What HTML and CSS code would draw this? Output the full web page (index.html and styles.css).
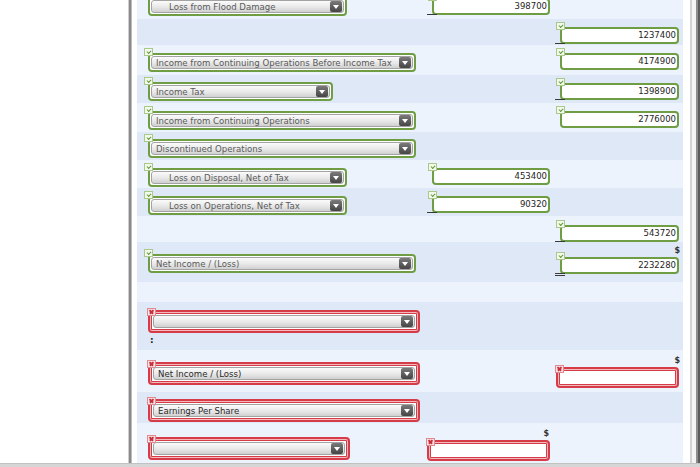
FILE: index.html
```html
<!DOCTYPE html>
<html>
<head>
<meta charset="utf-8">
<link rel="stylesheet" href="styles.css">
</head>
<body>
<div class="screen">
  <div class="side"></div>
  <div class="divider"></div>
  <div class="panel">
    <div class="sheet">
      <!-- row 1 -->
      <div class="row r1 lt">
        <div class="cell a pt7">
          <div class="field dd green w199"><span class="badge ok"></span><div class="sel"><span class="txt indent">Loss from Flood Damage</span><span class="arr"></span></div></div>
        </div>
        <div class="cell b pt8">
          <div class="field inp green ul"><span class="badge ok"></span><div class="box">398700</div></div>
        </div>
        <div class="cell c"></div>
      </div>
      <!-- row 2 -->
      <div class="row r2 dk">
        <div class="cell a"></div>
        <div class="cell b"></div>
        <div class="cell c pt8">
          <div class="field inp green ul"><span class="badge ok"></span><div class="box">1237400</div></div>
        </div>
      </div>
      <!-- row 3 -->
      <div class="row r3 lt">
        <div class="cell a pt8">
          <div class="field dd green w268"><span class="badge ok"></span><div class="sel"><span class="txt">Income from Continuing Operations Before Income Tax</span><span class="arr"></span></div></div>
        </div>
        <div class="cell b"></div>
        <div class="cell c pt8">
          <div class="field inp green"><span class="badge ok"></span><div class="box">4174900</div></div>
        </div>
      </div>
      <!-- row 4 -->
      <div class="row r4 dk">
        <div class="cell a pt7">
          <div class="field dd green w185"><span class="badge ok"></span><div class="sel"><span class="txt">Income Tax</span><span class="arr"></span></div></div>
        </div>
        <div class="cell b"></div>
        <div class="cell c pt8">
          <div class="field inp green ul"><span class="badge ok"></span><div class="box">1398900</div></div>
        </div>
      </div>
      <!-- row 5 -->
      <div class="row r5 lt">
        <div class="cell a pt8">
          <div class="field dd green w268"><span class="badge ok"></span><div class="sel"><span class="txt">Income from Continuing Operations</span><span class="arr"></span></div></div>
        </div>
        <div class="cell b"></div>
        <div class="cell c pt8">
          <div class="field inp green"><span class="badge ok"></span><div class="box">2776000</div></div>
        </div>
      </div>
      <!-- row 6 -->
      <div class="row r6 dk">
        <div class="cell a pt7">
          <div class="field dd green w268"><span class="badge ok"></span><div class="sel"><span class="txt">Discontinued Operations</span><span class="arr"></span></div></div>
        </div>
        <div class="cell b"></div>
        <div class="cell c"></div>
      </div>
      <!-- row 7 -->
      <div class="row r7 lt">
        <div class="cell a pt8">
          <div class="field dd green w199"><span class="badge ok"></span><div class="sel"><span class="txt indent">Loss on Disposal, Net of Tax</span><span class="arr"></span></div></div>
        </div>
        <div class="cell b pt8">
          <div class="field inp green"><span class="badge ok"></span><div class="box">453400</div></div>
        </div>
        <div class="cell c"></div>
      </div>
      <!-- row 8 -->
      <div class="row r8 dk">
        <div class="cell a pt8">
          <div class="field dd green w199"><span class="badge ok"></span><div class="sel"><span class="txt indent">Loss on Operations, Net of Tax</span><span class="arr"></span></div></div>
        </div>
        <div class="cell b pt8">
          <div class="field inp green ul"><span class="badge ok"></span><div class="box">90320</div></div>
        </div>
        <div class="cell c"></div>
      </div>
      <!-- row 9 -->
      <div class="row r9 lt">
        <div class="cell a"></div>
        <div class="cell b"></div>
        <div class="cell c pt9">
          <div class="field inp green ul"><span class="badge ok"></span><div class="box">543720</div></div>
        </div>
      </div>
      <!-- row 10 -->
      <div class="row r10 dk">
        <div class="cell a pt12">
          <div class="field dd green w268"><span class="badge ok"></span><div class="sel"><span class="txt">Net Income / (Loss)</span><span class="arr"></span></div></div>
        </div>
        <div class="cell b"></div>
        <div class="cell c pt3">
          <div class="dollar">$</div>
          <div class="field inp green dul"><span class="badge ok"></span><div class="box">2232280</div></div>
        </div>
      </div>
      <!-- row 11 -->
      <div class="row r11 lt">
        <div class="cell a"></div>
        <div class="cell b"></div>
        <div class="cell c"></div>
      </div>
      <!-- row 12 -->
      <div class="row r12 dk">
        <div class="cell a pt8">
          <div class="field dd red w272"><span class="badge bad"></span><div class="sel"><span class="txt"></span><span class="arr"></span></div></div>
          <div class="colon">:</div>
        </div>
        <div class="cell b"></div>
        <div class="cell c"></div>
      </div>
      <!-- row 13 -->
      <div class="row r13 lt">
        <div class="cell a pt12">
          <div class="field dd red w272"><span class="badge bad"></span><div class="sel"><span class="txt dark">Net Income / (Loss)</span><span class="arr"></span></div></div>
        </div>
        <div class="cell b"></div>
        <div class="cell c pt5">
          <div class="dollar">$</div>
          <div class="field inp red"><span class="badge bad"></span><div class="box"></div></div>
        </div>
      </div>
      <!-- row 14 -->
      <div class="row r14 dk">
        <div class="cell a pt7">
          <div class="field dd red w272"><span class="badge bad"></span><div class="sel"><span class="txt dark">Earnings Per Share</span><span class="arr"></span></div></div>
        </div>
        <div class="cell b"></div>
        <div class="cell c"></div>
      </div>
      <!-- row 15 -->
      <div class="row r15 lt">
        <div class="cell a pt14">
          <div class="field dd red w202"><span class="badge bad"></span><div class="sel"><span class="txt"></span><span class="arr"></span></div></div>
        </div>
        <div class="cell b pt5">
          <div class="dollar">$</div>
          <div class="field inp red"><span class="badge bad"></span><div class="box"></div></div>
        </div>
        <div class="cell c"></div>
      </div>
    </div>
  </div>
  <div class="edge"></div>
</div>
<div class="bottombar"></div>
</body>
</html>
```

FILE: styles.css
```css
* { box-sizing: border-box; }
html, body { margin: 0; padding: 0; }
body {
  width: 700px;
  height: 467px;
  overflow: hidden;
  background: #fff;
  font-family: "DejaVu Sans", Verdana, sans-serif;
}
.screen {
  display: flex;
  height: 463px;
  overflow: hidden;
}
.side { width: 128px; background: #fff; flex: none; }
.divider {
  width: 4px;
  flex: none;
  background: #8a8a8a;
  border-left: 1px solid #cfcfcf;
  border-right: 1px solid #bdbdbd;
}
.panel {
  width: 558px;
  flex: none;
  padding: 0 7px 0 5px;
  background: #fff;
  overflow: hidden;
}
.sheet {
  margin-top: -10px;
  width: 546px;
}
.edge {
  flex: none;
  width: 10px;
  background: linear-gradient(to right, #d2d2d2 0, #d2d2d2 2px, #f3f3f3 2px, #f3f3f3 6px, #8d8d8d 6px, #8d8d8d 8px, #5a5a5a 8px);
}
.bottombar {
  height: 4px;
  background: #d6d6d6;
  border-top: 1px solid #c2c2c2;
}
.row {
  display: grid;
  grid-template-columns: 285px 131px 130px;
}
.lt { background: #edf3fc; }
.dk { background: #dee8f6; }
.r1 { height: 29px; }
.r2 { height: 26px; }
.r3 { height: 30px; }
.r4 { height: 28px; }
.r5 { height: 29px; }
.r6 { height: 28px; }
.r7 { height: 28px; }
.r8 { height: 28px; }
.r9 { height: 26px; }
.r10 { height: 40px; }
.r11 { height: 20px; }
.r12 { height: 48px; }
.r13 { height: 42px; }
.r14 { height: 31px; }
.r15 { height: 40px; }

.pt3 { padding-top: 3px; }
.pt5 { padding-top: 5px; }
.pt7 { padding-top: 7px; }
.pt8 { padding-top: 8px; }
.pt9 { padding-top: 9px; }
.pt12 { padding-top: 12px; }
.pt14 { padding-top: 14px; }

.cell { min-width: 0; }

.field { position: relative; }

/* dropdown fields */
.a .field.green { margin-left: 11px; }
.a .field.red { margin-left: 11px; }
.w268 { width: 268px; }
.w199 { width: 199px; }
.w185 { width: 185px; }
.w272 { width: 272px; }
.w202 { width: 202px; }

.field.green {
  border: 2px solid #6e9d43;
  border-radius: 4px;
  background: #fff;
}
.dd.green { padding: 1px; height: 19px; }
.field.red {
  border: 2px solid #d63c48;
  border-radius: 4px;
  background: #fff;
  box-shadow: inset 0 0 0 1px #f4b9bd, inset 0 0 0 2px #d63c48;
}
.dd.red { padding: 3px; height: 23px; }

.sel {
  display: flex;
  align-items: center;
  height: 100%;
  border: 1px solid #a3a3a3;
  border-radius: 3px;
  background: linear-gradient(#fbfbfb, #e8e8e8 55%, #d0d0d0);
  padding: 0 1px 0 4px;
}
.txt {
  flex: 1;
  font-size: 8.6px;
  color: #5a5a5a;
  white-space: nowrap;
  overflow: hidden;
  line-height: 12px;
}
.txt.indent { padding-left: 13px; }
.txt.dark { color: #2a2a2a; }
.arr {
  flex: none;
  width: 12px;
  height: 11px;
  border-radius: 2px;
  background: linear-gradient(#7a7a7a, #454545);
  position: relative;
}
.arr::after {
  content: "";
  position: absolute;
  left: 3px;
  top: 4px;
  border-left: 3px solid transparent;
  border-right: 3px solid transparent;
  border-top: 4px solid #fff;
}

/* input fields */
.b .field.green { margin-left: 10px; width: 118px; }
.c .field.green { margin-left: 7px; width: 119px; }
.c .field.red { margin-left: 3px; width: 123px; }
.b .field.red { margin-left: 5px; width: 123px; }
.inp.green { height: 17px; }
.inp.red { height: 21px; padding: 3px; }
.box {
  height: 100%;
  font-size: 8.5px;
  line-height: 13px;
  color: #1e1e1e;
  text-align: right;
  padding-right: 1px;
}
.inp.red .box { border-radius: 2px; }

.field.ul::before, .field.dul::before {
  content: "";
  position: absolute;
  left: -7px;
  width: 10px;
  bottom: -2px;
  border-bottom: 1px solid #3a3a3a;
}
.field.dul::before {
  border-bottom: 3px double #3a3a3a;
  bottom: -4px;
}

.dollar {
  font-size: 8px;
  line-height: 12px;
  height: 12px;
  color: #333;
  text-align: right;
  padding-right: 3px;
  font-weight: bold;
}
.b .dollar { padding-right: 4px; }

.colon {
  margin-left: 13px;
  margin-top: 2px;
  font-size: 9px;
  line-height: 10px;
  font-weight: bold;
  color: #222;
}

/* badges */
.badge {
  position: absolute;
  width: 9px;
  height: 8px;
  z-index: 2;
}
.badge.ok {
  left: -6px;
  top: -7px;
  background: #f4f9ee;
  border: 1px solid #a9c98b;
}
.badge.ok::after {
  content: "";
  position: absolute;
  left: 2px;
  top: 1px;
  width: 3px;
  height: 2px;
  border-left: 1px solid #5f9a2e;
  border-bottom: 1px solid #5f9a2e;
  transform: rotate(-45deg);
}
.badge.bad {
  left: -3px;
  top: -4px;
  background: #fbe2e4;
  border: 1px solid #dd8a90;
}
.badge.bad::before, .badge.bad::after {
  content: "";
  position: absolute;
  left: 1px;
  top: 2px;
  width: 5px;
  height: 1.5px;
  background: #c92f3b;
  transform: rotate(45deg);
}
.badge.bad::after { transform: rotate(-45deg); }
```
